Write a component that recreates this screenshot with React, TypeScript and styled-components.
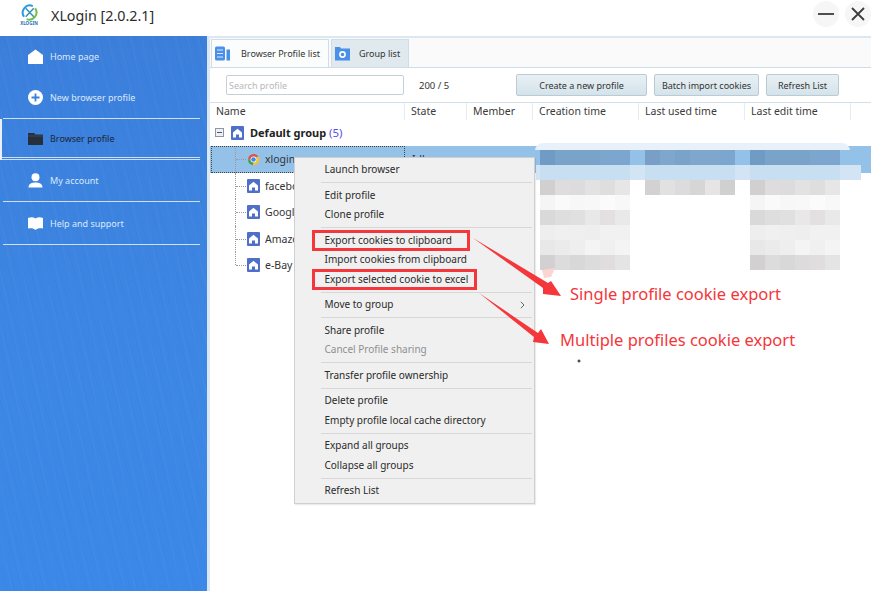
import React from 'react';
import styled, { createGlobalStyle } from 'styled-components';

const GlobalStyle = createGlobalStyle`
  html, body { margin: 0; padding: 0; background: #fff; }
  body { font-family: "Noto Sans", "Open Sans", sans-serif; color: #2b2b2b; overflow: hidden; }
  * { box-sizing: border-box; }
`;

const NAV = [
  { key: 'home', label: 'Home page', height: 41 },
  { key: 'plus', label: 'New browser profile', height: 42, ruled: true },
  { key: 'folder', label: 'Browser profile', height: 41, active: true, ruled: true },
  { key: 'user', label: 'My account', height: 42, ruled: true },
  { key: 'book', label: 'Help and support', height: 43, ruled: true },
];

const COLUMNS = ['Name', 'State', 'Member', 'Creation time', 'Last used time', 'Last edit time'];
const COLUMN_TEMPLATE = '195px 62px 66px 106px 106px 106px 1fr';

const PROFILES = ['xlogin', 'facebook', 'Google', 'Amazon', 'e-Bay'];

const MENU: { label: string; disabled?: boolean; arrow?: boolean; boxWidth?: number }[][] = [
  [{ label: 'Launch browser' }],
  [{ label: 'Edit profile' }, { label: 'Clone profile' }],
  [
    { label: 'Export cookies to clipboard', boxWidth: 152 },
    { label: 'Import cookies from clipboard' },
    { label: 'Export selected cookie to excel', boxWidth: 159 },
  ],
  [{ label: 'Move to group', arrow: true }],
  [{ label: 'Share profile' }, { label: 'Cancel Profile sharing', disabled: true }],
  [{ label: 'Transfer profile ownership' }],
  [{ label: 'Delete profile' }, { label: 'Empty profile local cache directory' }],
  [{ label: 'Expand all groups' }, { label: 'Collapse all groups' }],
  [{ label: 'Refresh List' }],
];

const MOSAIC_FULL = [
  ['#6f9bc4', '#7aa3c9', '#7aa3c9', '#7aa3c9', '#7ca6cd', '#7ca6cd'],
  ['#c8dff2', '#c8dff2', '#c8dff2', '#c8dff2', '#c8dff2', '#c8dff2'],
  ['#d1cfd0', '#dedcdd', '#dcdcde', '#e2e2e2', '#dfddde', '#e6e6e6'],
  ['#f5f5f5', '#fafafa', '#f7f7f7', '#f8f8f8', '#fbfbfb', '#f8f8f8'],
  ['#d9d9d9', '#dedede', '#e0e0e0', '#e8e8e8', '#e2e0e1', '#e9e9e9'],
  ['#eeeeee', '#f0f0f0', '#efefef', '#eeeeee', '#f1f1f1', '#f1f1f1'],
  ['#e8e8e8', '#ebebeb', '#eeeeee', '#f4f4f4', '#f0f0f0', '#f4f4f4'],
  ['#d2d0d1', '#dcdcdc', '#d8d8d8', '#dcdcdc', '#dfdddd', '#e4e4e4'],
];
const MOSAIC_SHORT = [
  ['#7a9fc6', '#7fa6cc', '#7aa3c9', '#7fa6cc', '#7fa6cc', '#7ca6cd'],
  ['#c8dff2', '#c8dff2', '#c8dff2', '#c8dff2', '#c8dff2', '#c8dff2'],
  ['#d3d1d2', '#e1e1e1', '#dcdcde', '#d6d6d6', '#e6e4e5', '#d0d0d0'],
];

function NavIcon({ kind, dark }: { kind: string; dark?: boolean }) {
  const fill = dark ? '#26303c' : '#ffffff';
  if (kind === 'home')
    return (
      <svg width="15" height="15" viewBox="0 0 15 15">
        <path d="M7.5 0.5 L15 6 V15 H0 V6 Z" fill={fill} />
      </svg>
    );
  if (kind === 'plus')
    return (
      <svg width="15" height="15" viewBox="0 0 15 15">
        <circle cx="7.5" cy="7.5" r="7.5" fill={fill} />
        <path d="M7.5 3.5 V11.5 M3.5 7.5 H11.5" stroke="#3a80dc" strokeWidth="1.8" />
      </svg>
    );
  if (kind === 'folder')
    return (
      <svg width="15" height="15" viewBox="0 0 15 15">
        <path d="M0 2 H6 L7.5 3.5 H15 V14 H0 Z" fill={fill} />
        <path d="M0 5 H15" stroke="#4a5a6c" strokeWidth="0.6" />
      </svg>
    );
  if (kind === 'user')
    return (
      <svg width="15" height="15" viewBox="0 0 15 15">
        <circle cx="7.5" cy="4.2" r="4" fill={fill} />
        <path d="M0.5 14.5 C0.5 10.5 4 9.5 7.5 9.5 C11 9.5 14.5 10.5 14.5 14.5 Z" fill={fill} />
      </svg>
    );
  return (
    <svg width="15" height="13" viewBox="0 0 15 13">
      <path d="M0 1 C3 0 5.5 0.2 7.5 1.5 C9.5 0.2 12 0 15 1 V11.5 C12 10.8 9.5 11 7.5 13 C5.5 11 3 10.8 0 11.5 Z" fill={fill} />
    </svg>
  );
}

function Logo() {
  return (
    <LogoWrap>
      <svg width="17" height="17" viewBox="0 0 18 18">
        <path d="M3.2 13.5 A7.6 7.6 0 0 1 12.5 2.2" fill="none" stroke="#2a9bd8" strokeWidth="2.1" />
        <path d="M15 4.6 A7.6 7.6 0 0 1 6 16" fill="none" stroke="#6cc04a" strokeWidth="2.1" />
        <path d="M5 4.5 L13.5 13.5 M13.5 4.5 L5 13.5" stroke="#3a8fb8" strokeWidth="1.6" />
      </svg>
      <LogoText>XLOGIN</LogoText>
    </LogoWrap>
  );
}

function HouseBadge() {
  return (
    <svg width="13" height="14" viewBox="0 0 13 14">
      <rect width="13" height="14" rx="1" fill="#4f6fc9" />
      <path d="M6.5 2.8 L11 6.6 V11.5 H8 V8.6 H5 V11.5 H2 V6.6 Z" fill="#fff" />
    </svg>
  );
}

function ChromeIcon() {
  return (
    <svg width="13" height="13" viewBox="0 0 24 24">
      <path d="M12 12 L2 12 A10.5 10.5 0 0 1 21.5 7 L12 7 Z" fill="#e3503e" />
      <path d="M12 12 L21.5 7 A10.5 10.5 0 0 1 11 22.5 L12 12 Z" fill="#f5c33b" />
      <path d="M12 12 L11 22.5 A10.5 10.5 0 0 1 2 12 Z" fill="#45a04f" />
      <circle cx="12" cy="12" r="5.4" fill="#fff" />
      <circle cx="12" cy="12" r="4.2" fill="#4587f2" />
    </svg>
  );
}

function ListTabIcon() {
  return (
    <svg width="15" height="15" viewBox="0 0 15 15">
      <rect x="0" y="0.5" width="10" height="14" rx="1.5" fill="#4a90e8" />
      <path d="M2 4 H8 M2 7.5 H8 M2 11 H8" stroke="#d8e8fb" strokeWidth="1.1" />
      <rect x="11.5" y="3.5" width="3.5" height="11" fill="#4a90e8" />
    </svg>
  );
}

function GroupTabIcon() {
  return (
    <svg width="15" height="15" viewBox="0 0 15 15">
      <path d="M0 1 H5 L6 2.5 H15 V14.5 H0 Z" fill="#4a90e8" />
      <circle cx="7.5" cy="8.5" r="2.6" fill="none" stroke="#fff" strokeWidth="1.6" />
    </svg>
  );
}

function ArrowShape({ points }: { points: string }) {
  return <polygon points={points} fill="#f5363a" />;
}

export default function App() {
  return (
    <Page>
      <GlobalStyle />
      <TitleBar>
        <Logo />
        <Title>XLogin [2.0.2.1]</Title>
        <WindowButtons>
          <WindowButton aria-label="Minimize">
            <svg width="16" height="16" viewBox="0 0 16 16">
              <path d="M0 8 H16" stroke="#3c3c3c" strokeWidth="1.8" />
            </svg>
          </WindowButton>
          <WindowButton aria-label="Close">
            <svg width="16" height="16" viewBox="0 0 16 16">
              <path d="M2 2 L14 14 M14 2 L2 14" stroke="#3c3c3c" strokeWidth="1.8" />
            </svg>
          </WindowButton>
        </WindowButtons>
      </TitleBar>

      <Body>
        <Sidebar>
          {NAV.map((item) => (
            <NavRow key={item.key} $height={item.height} $active={item.active} $ruled={item.ruled}>
              <NavIconSlot>
                <NavIcon kind={item.key} dark={item.active} />
              </NavIconSlot>
              {item.label}
            </NavRow>
          ))}
        </Sidebar>

        <Main>
          <TabBar>
            <Tab $active>
              <ListTabIcon />
              Browser Profile list
            </Tab>
            <Tab>
              <GroupTabIcon />
              Group list
            </Tab>
          </TabBar>

          <Toolbar>
            <SearchBox placeholder="Search profile" readOnly />
            <Counter>200 / 5</Counter>
            <ToolButton $width={131}>Create a new profile</ToolButton>
            <ToolButton $width={105}>Batch import cookies</ToolButton>
            <ToolButton $width={73}>Refresh List</ToolButton>
          </Toolbar>

          <HeaderRow>
            {COLUMNS.map((c) => (
              <HeaderCell key={c}>{c}</HeaderCell>
            ))}
          </HeaderRow>

          <TableBody>
            <GroupRow>
              <Expander />
              <HouseBadge />
              <GroupName>
                Default group <GroupCount>(5)</GroupCount>
              </GroupName>
            </GroupRow>

            {PROFILES.map((name, i) => (
              <ProfileRow key={name} $selected={i === 0}>
                <NameCell $selected={i === 0} $last={i === PROFILES.length - 1}>
                  {i === 0 ? <ChromeIcon /> : <HouseBadge />}
                  <span>{name}</span>
                </NameCell>
                <StateCell>{i === 0 ? 'Idle' : ''}</StateCell>
              </ProfileRow>
            ))}

            <PaleBand />
            <PaleBandLower />
            <MosaicStrip>
              {[MOSAIC_FULL, MOSAIC_SHORT, MOSAIC_FULL].map((rows, c) => (
                <MosaicColumn key={c}>
                  {rows.flat().map((color, i) => (
                    <MosaicCell key={i} style={{ background: color }} />
                  ))}
                </MosaicColumn>
              ))}
            </MosaicStrip>
          </TableBody>
        </Main>
      </Body>

      <ContextMenu>
        {MENU.map((group, g) => (
          <React.Fragment key={g}>
            {g > 0 && <MenuSeparator />}
            {group.map((item) => (
              <MenuItem key={item.label} $disabled={item.disabled} $boxWidth={item.boxWidth}>
                {item.label}
                {item.arrow && (
                  <MenuArrow width="5" height="8" viewBox="0 0 5 8">
                    <path d="M0.8 0.8 L4 4 L0.8 7.2" fill="none" stroke="#666" strokeWidth="1" />
                  </MenuArrow>
                )}
              </MenuItem>
            ))}
          </React.Fragment>
        ))}
      </ContextMenu>

      <ArrowLayer width="871" height="591" viewBox="0 0 871 591">
        <polygon points="542,270 555,268 551,277 544,278" fill="#fbd4d4" />
        <ArrowShape points="473,238 548,283 551,281 561,296 543,294 543,288" />
        <ArrowShape points="479,293 538,333 541,329 549,344 533,342 534,337" />
        <path d="M577.5 361 H580.5 M579 359.5 V362.5" stroke="#111" strokeWidth="1" />
      </ArrowLayer>
      <Callout $x={570} $y={283}>Single profile cookie export</Callout>
      <Callout $x={560} $y={329}>Multiple profiles cookie export</Callout>
    </Page>
  );
}

const Page = styled.div`
  position: relative;
  width: 871px;
  height: 591px;
  overflow: hidden;
  background: #fff;
  display: flex;
  flex-direction: column;
`;

const TitleBar = styled.header`
  height: 36px;
  flex: none;
  display: flex;
  align-items: center;
  padding-left: 20px;
  background: #fff;
`;

const LogoWrap = styled.div`
  width: 18px;
  margin-top: -6px;
  display: flex;
  flex-direction: column;
  align-items: center;
`;

const LogoText = styled.span`
  font-size: 4.5px;
  line-height: 5px;
  font-weight: 700;
  color: #2a6fb8;
  letter-spacing: 0;
`;

const Title = styled.h1`
  margin: -6px 0 0 13px;
  font-size: 14.3px;
  font-weight: 400;
  color: #2c2c2c;
`;

const WindowButtons = styled.div`
  margin-left: auto;
  margin-top: -9px;
  display: flex;
  gap: 6px;
`;

const WindowButton = styled.button`
  width: 26px;
  height: 26px;
  padding: 0;
  border: 0;
  border-radius: 50%;
  background: #f6f6f6;
  display: flex;
  align-items: center;
  justify-content: center;
`;

const Sidebar = styled.nav`
  width: 207px;
  flex: none;
  padding-right: 4px;
  background:
    repeating-linear-gradient(75deg, rgba(20, 70, 150, 0.035) 0 1px, transparent 1px 7px),
    repeating-linear-gradient(78deg, rgba(255, 255, 255, 0.02) 0 2px, transparent 2px 11px),
    linear-gradient(180deg, #3b7fdb 0%, #3d87e4 60%, #3b88e8 100%);
`;

const Body = styled.div`
  flex: 1;
  min-height: 0;
  display: flex;
`;

const NavRow = styled.div<{ $height: number; $active?: boolean; $ruled?: boolean }>`
  position: relative;
  height: ${(p) => p.$height}px;
  display: flex;
  align-items: center;
  margin: 0 3px;
  padding-left: 25px;
  font-size: 9px;
  color: ${(p) => (p.$active ? '#1d2733' : '#dbe9fb')};
  border-bottom: ${(p) => (p.$ruled ? '1px solid #cfe0f6' : '0')};
  ${(p) =>
    p.$active &&
    `margin-left: 0;
    padding: 0 0 2px 26px;
    border-left: 2px solid #e8f1fb;
    &::after {
      content: '';
      position: absolute;
      left: 0;
      right: 0;
      top: 38px;
      height: 1px;
      background: #cfe0f6;
    }`}
`;

const NavIconSlot = styled.span`
  width: 22px;
  flex: none;
  display: flex;
  align-items: center;
`;

const Main = styled.main`
  flex: 1;
  min-width: 0;
  display: flex;
  flex-direction: column;
  border-left: 3px solid #dbe7f1;
  border-top: 2px solid #dbe7f1;
  background: #fff;
`;

const TabBar = styled.div`
  height: 30px;
  flex: none;
  display: flex;
  gap: 2px;
  padding: 1px 0 0 1px;
  background: #fafafa;
  border-bottom: 1px solid #cfdde8;
`;

const Tab = styled.div<{ $active?: boolean }>`
  display: flex;
  align-items: center;
  gap: ${(p) => (p.$active ? '11px' : '9px')};
  padding: 0 8px 0 3px;
  font-size: 9px;
  color: #333;
  background: ${(p) => (p.$active ? '#fbfcfc' : '#dfe9ee')};
  border: 1px solid #cfdde8;
  border-bottom: 0;
`;

const Toolbar = styled.div`
  height: 35px;
  flex: none;
  display: flex;
  align-items: center;
  padding: 0 0 0 16px;
  border-bottom: 1px solid #d3e0ea;
`;

const SearchBox = styled.input`
  width: 178px;
  height: 20px;
  flex: none;
  padding: 0 2px;
  border: 1px solid #c5d0d6;
  border-radius: 2px;
  font: 9px "Noto Sans", sans-serif;
  background: #fff;
  &::placeholder { color: #b8b8b8; }
`;

const Counter = styled.span`
  width: 112px;
  flex: none;
  padding-left: 15px;
  font-size: 9.5px;
  color: #333;
`;

const ToolButton = styled.button<{ $width: number }>`
  width: ${(p) => p.$width}px;
  height: 22px;
  flex: none;
  margin-right: 7px;
  padding: 0;
  border: 1px solid #bccbd3;
  border-radius: 2px;
  background: linear-gradient(180deg, #e8f0f4 0%, #d4e3eb 100%);
  font: 9px "Noto Sans", sans-serif;
  color: #333;
`;

const HeaderRow = styled.div`
  height: 17px;
  flex: none;
  display: grid;
  grid-template-columns: ${COLUMN_TEMPLATE};
`;

const HeaderCell = styled.div`
  padding-left: 6px;
  font-size: 10.5px;
  line-height: 17px;
  color: #3a3a3a;
  border-right: 1px solid #e6edf2;
`;

const TableBody = styled.div`
  position: relative;
  flex: 1;
  min-height: 0;
  background: #fff;
`;

const GroupRow = styled.div`
  height: 26px;
  display: flex;
  align-items: center;
  padding: 0 0 1px 5px;
`;

const Expander = styled.span`
  position: relative;
  width: 9px;
  height: 9px;
  margin-right: 7px;
  border: 1px solid #8c96a8;
  background: #eef0f4;
  &::after {
    content: '';
    position: absolute;
    left: 1px;
    right: 1px;
    top: 3px;
    height: 1px;
    background: #555;
  }
`;

const GroupName = styled.span`
  margin-left: 6px;
  font-size: 11px;
  font-weight: 700;
  color: #222;
`;

const GroupCount = styled.span`
  font-size: 11.5px;
  font-weight: 400;
  color: #5a4ff0;
`;

const ProfileRow = styled.div<{ $selected?: boolean }>`
  height: 26.5px;
  display: grid;
  grid-template-columns: ${COLUMN_TEMPLATE};
  background: ${(p) => (p.$selected ? '#93c1e8' : 'transparent')};
`;

const NameCell = styled.div<{ $selected?: boolean; $last?: boolean }>`
  position: relative;
  display: flex;
  align-items: center;
  gap: 5px;
  padding-left: 36px;
  margin-left: 1px;
  font-size: 10.5px;
  color: #333;
  outline: ${(p) => (p.$selected ? '1px dotted #444' : '0')};
  outline-offset: -1px;
  &::before {
    content: '';
    position: absolute;
    left: 24px;
    top: 0;
    bottom: ${(p) => (p.$last ? '50%' : '0')};
    border-left: 1px dotted #9a9a9a;
  }
  &::after {
    content: '';
    position: absolute;
    left: 25px;
    width: 10px;
    top: 50%;
    border-top: 1px dotted #9a9a9a;
  }
`;

const StateCell = styled.div`
  padding-left: 7px;
  font-size: 10.5px;
  line-height: 26px;
  color: #333;
`;

const PaleBand = styled.div`
  position: absolute;
  left: 325px;
  top: 23px;
  width: 315px;
  height: 24px;
  border-radius: 8px 8px 0 0;
  background: linear-gradient(180deg, #e8f1fa 0 7px, transparent 7px);
`;

const PaleBandLower = styled.div`
  position: absolute;
  left: 326px;
  top: 45px;
  width: 325px;
  height: 15px;
  background: #d3e5f5;
`;

const MosaicStrip = styled.div`
  position: absolute;
  left: 330px;
  top: 30px;
  display: flex;
  gap: 15px;
`;

const MosaicColumn = styled.div`
  width: 90px;
  display: grid;
  grid-template-columns: repeat(6, 15px);
  grid-auto-rows: 15px;
`;

const MosaicCell = styled.div``;

const ContextMenu = styled.div`
  position: absolute;
  left: 294px;
  top: 157px;
  width: 241px;
  padding: 2px 0;
  background: #f0f0f0;
  border: 1px solid #cfcfcf;
  box-shadow: 1px 1px 1px rgba(0, 0, 0, 0.08);
`;

const MenuItem = styled.div<{ $disabled?: boolean; $boxWidth?: number }>`
  position: relative;
  height: 19.5px;
  padding-left: 29.5px;
  font-size: 10px;
  line-height: 19.5px;
  white-space: nowrap;
  color: ${(p) => (p.$disabled ? '#8f8f8f' : '#2a2a2a')};
  ${(p) =>
    p.$boxWidth &&
    `&::after {
      content: '';
      position: absolute;
      left: 17px;
      top: -1px;
      bottom: -1px;
      width: ${p.$boxWidth}px;
      border: 3px solid #f5363a;
    }`}
`;

const MenuArrow = styled.svg`
  position: absolute;
  right: 9px;
  top: 6px;
`;

const MenuSeparator = styled.div`
  height: 6px;
  margin: 0 2px 0 26px;
  display: flex;
  align-items: center;
  &::before {
    content: '';
    flex: 1;
    height: 1px;
    background: #d7d7d7;
  }
`;

const ArrowLayer = styled.svg`
  position: absolute;
  left: 0;
  top: 0;
  pointer-events: none;
`;

const Callout = styled.span<{ $x: number; $y: number }>`
  position: absolute;
  left: ${(p) => p.$x}px;
  top: ${(p) => p.$y}px;
  font-size: 16.5px;
  line-height: 22px;
  white-space: nowrap;
  color: #f5363a;
`;
